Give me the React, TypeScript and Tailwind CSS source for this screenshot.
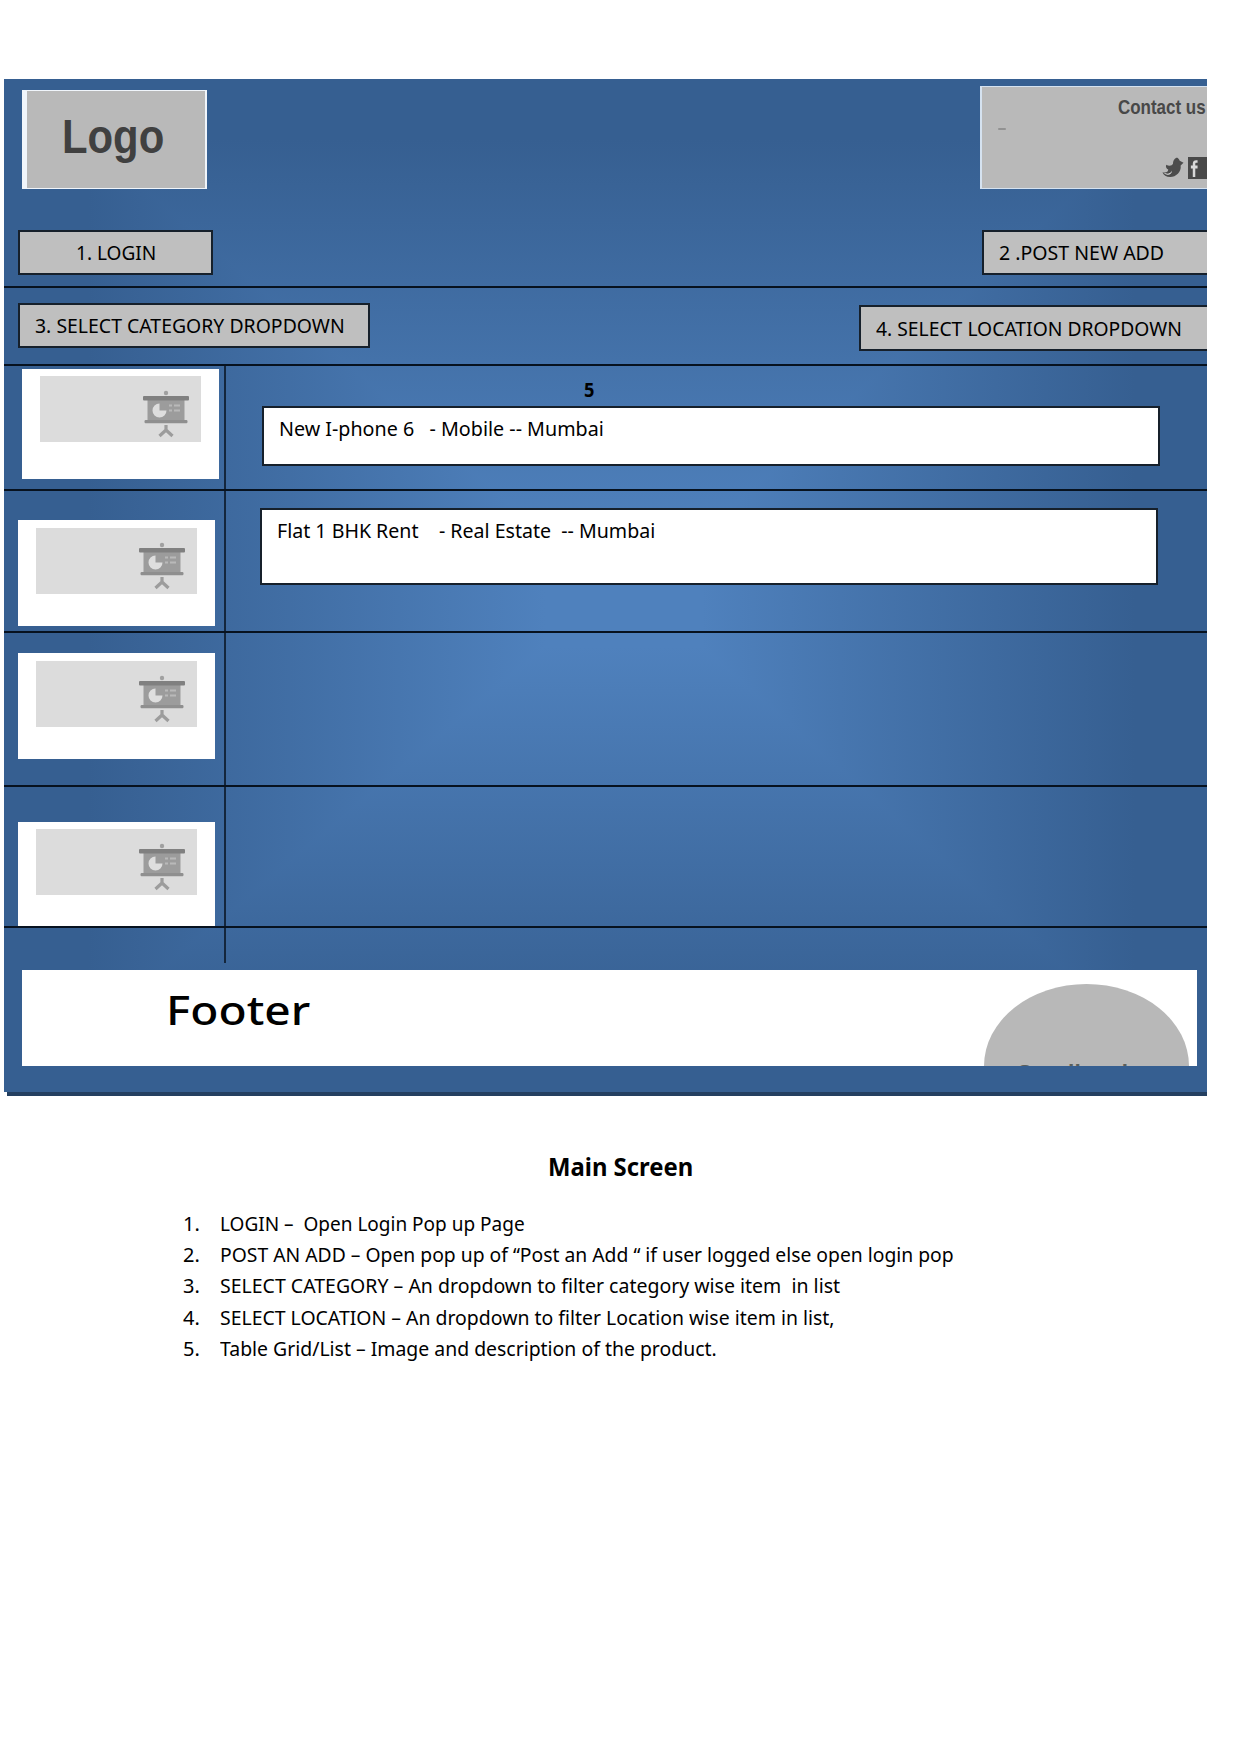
import { useLayoutEffect, useRef, useState, type ReactNode } from "react";

/* Condensed run of text: squeezed horizontally to the given width. */
function Fit({ w, children, className = "" }: { w: number; children: ReactNode; className?: string }) {
  const ref = useRef<HTMLSpanElement>(null);
  const [scale, setScale] = useState(1);
  useLayoutEffect(() => {
    if (ref.current) setScale(w / ref.current.offsetWidth);
  }, [w]);
  return (
    <span className="block h-full" style={{ width: w }}>
      <span
        ref={ref}
        className={"inline-block origin-left whitespace-pre " + className}
        style={{ transform: `scaleX(${scale})` }}
      >
        {children}
      </span>
    </span>
  );
}

function Thumb({ className }: { className: string }) {
  return (
    <div className={"w-[197px] bg-white pl-[18px] " + className}>
      <div className="flex h-[66px] w-[161px] justify-end bg-[#dcdcdc] pr-[11px] pt-[14px]">
        <svg className="h-[50px] w-[48px]" viewBox="0 0 48 50">
          <circle cx="24" cy="3" r="2.2" fill="#a0a0a0" />
          <rect x="5.500" y="8" width="37" height="25" fill="#9c9c9c" />
          <rect x="1" y="6" width="46" height="4.500" rx="1" fill="#808080" />
          <rect x="2.500" y="30" width="43" height="3.200" rx="1.200" fill="#8f8f8f" />
          <path d="M17.500 13.500a7 7 0 1 0 7 7h-7z" fill="#dedede" />
          <path d="M27 15.500h3M32 15.500h6M27 20.500h3M32 20.500h6" stroke="#b9b9b9" strokeWidth="2" />
          <path d="M24 35v6M24 40l-6.500 6M24 40l6.500 6" stroke="#9c9c9c" strokeWidth="3.200" fill="none" />
        </svg>
      </div>
    </div>
  );
}

const notes: { n: string; t: string; w: number }[] = [
  { n: "1.", t: "LOGIN –  Open Login Pop up Page", w: 305 },
  { n: "2.", t: "POST AN ADD – Open pop up of “Post an Add “ if user logged else open login pop", w: 734 },
  { n: "3.", t: "SELECT CATEGORY – An dropdown to filter category wise item  in list", w: 620 },
  { n: "4.", t: "SELECT LOCATION – An dropdown to filter Location wise item in list,", w: 615 },
  { n: "5.", t: "Table Grid/List – Image and description of the product.", w: 497 },
];

export default function App() {
  return (
    <div className="min-h-[1754px] w-[1240px] bg-white pt-[79px] font-['Noto_Sans',sans-serif] text-[20px] leading-[28px] text-black">
      <div className="ml-1 h-[1013px] w-[1203px] bg-[linear-gradient(to_right,#365f91_0%,#365f91_7%,#4f81bd_45%,#4f81bd_58%,#365f91_94%,#365f91_100%),linear-gradient(to_bottom,#365f91_0%,#365f91_6%,#4f81bd_45%,#4f81bd_56%,#365f91_94%,#365f91_100%)] bg-blend-darken">
        {/* Header */}
        <header className="flex h-[209px] flex-col border-b-2 border-[#07121f]">
          <div className="flex h-[151px] justify-between">
            <div className="ml-[18px] mt-[11px] flex h-[99px] w-[185px] border-y border-l-[5px] border-r-2 border-[#f0f5fb] bg-[#b9b9b9] pl-[35px] pt-[20px]">
              <Fit w={102} className="font-['Liberation_Sans'] text-[48px] font-bold leading-[52px] text-[#404040]">Logo</Fit>
            </div>
            <div className="mt-[7px] h-[103px] w-[227px] overflow-hidden border-y border-l-2 border-[#d5e2f0] bg-[#b9b9b9]">
              <div className="pl-[136px] pt-[6px]">
                <div className="h-7"><Fit w={88} className="font-['Liberation_Sans'] text-[21px] font-bold leading-[28px] text-[#484848]">Contact us</Fit></div>
              </div>
              <div className="ml-4 mt-[7px] h-[2px] w-2 rounded-full bg-[#929292]" />
              <div className="ml-[179px] mt-[27px] flex gap-[3px]">
                <svg className="h-[22px] w-[24px] shrink-0" viewBox="0 0 24 23">
                  <path d="M1 16c4 1 6-1 6-3-2-1-3-3-2-5 3 2 6 1 7-1 0-4 3-7 5-6 1 1 2 2 2 3l4 2-3 3c1 7-5 12-11 12-4 0-7-2-8-5z" fill="#4c4c4c" />
                  <path d="M2 16c4 3 8 1 9-2 0 4-5 7-9 2z" fill="#e2e2e2" />
                </svg>
                <svg className="h-[22px] w-[22px] shrink-0" viewBox="0 0 23 23">
                  <rect width="23" height="23" fill="#494949" />
                  <path d="M5 21V12H3V9h2V7c0-3 2-4 5-3.500V6c-2-.3-2.400 0-2.400 1.500V9H10v3H7.600v9z" fill="#d8d8d8" />
                </svg>
              </div>
            </div>
          </div>
          <div className="flex justify-between pl-[14px]">
            <div className="h-[45px] w-[195px] border-2 border-[#16202b] bg-[#bfbfbf] pl-[56px] pt-[7px]">
              <Fit w={80}>1. LOGIN</Fit>
            </div>
            <div className="h-[45px] w-[225px] border-2 border-r-0 border-[#16202b] bg-[#bfbfbf] pl-[15px] pt-[7px]">
              <Fit w={165}>2 .POST NEW ADD</Fit>
            </div>
          </div>
        </header>

        {/* Filters */}
        <div className="flex h-[78px] items-start justify-between border-b-2 border-[#07121f] pl-[14px] pt-[15px]">
          <div className="h-[45px] w-[352px] border-2 border-[#16202b] bg-[#bfbfbf] pl-[15px] pt-[7px]">
            <Fit w={310}>3. SELECT CATEGORY DROPDOWN</Fit>
          </div>
          <div className="mt-[2px] h-[46px] w-[348px] border-2 border-r-0 border-[#16202b] bg-[#bfbfbf] pl-[15px] pt-[8px]">
            <Fit w={306}>4. SELECT LOCATION DROPDOWN</Fit>
          </div>
        </div>

        {/* Listing grid */}
        <div>
          <div className="flex h-[125px] border-b-2 border-[#07121f]">
            <div className="w-[222px] border-r-2 border-[#14263c] pl-[18px] pt-[3px]"><Thumb className="h-[110px] pt-[7px]" /></div>
            <div className="pl-[36px]">
              <div className="h-[40px] pl-[322px] pt-[10px] font-bold"><Fit w={10}>5</Fit></div>
              <div className="h-[60px] w-[898px] border-2 border-[#16202b] bg-white pl-[15px] pt-[7px]">
                <Fit w={325}>{"New I-phone 6   - Mobile -- Mumbai"}</Fit>
              </div>
            </div>
          </div>
          <div className="flex h-[142px] border-b-2 border-[#07121f]">
            <div className="w-[222px] border-r-2 border-[#14263c] pl-[14px] pt-[29px]"><Thumb className="h-[106px] pt-2" /></div>
            <div className="pl-[34px] pt-[17px]">
              <div className="h-[77px] w-[898px] border-2 border-[#16202b] bg-white pl-[15px] pt-[7px]">
                <Fit w={378}>{"Flat 1 BHK Rent    - Real Estate  -- Mumbai"}</Fit>
              </div>
            </div>
          </div>
          <div className="h-[154px] border-b-2 border-[#07121f]">
            <div className="h-full w-[222px] border-r-2 border-[#14263c] pl-[14px] pt-5"><Thumb className="h-[106px] pt-2" /></div>
          </div>
          <div className="h-[141px] border-b-2 border-[#07121f]">
            <div className="h-full w-[222px] border-r-2 border-[#14263c] pl-[14px] pt-[35px]"><Thumb className="h-[104px] pt-[7px]" /></div>
          </div>
          <div className="h-[35px] w-[222px] border-r-2 border-[#14263c]" />
        </div>

        {/* Footer */}
        <footer className="ml-[18px] mt-[7px] flex h-[96px] w-[1175px] justify-between overflow-hidden bg-white pl-[144px] pr-[8px]">
          <div className="pt-[13px]"><Fit w={144} className="text-[40px] font-medium leading-[54px]">Footer</Fit></div>
          <div className="mt-[14px] h-[164px] w-[205px] overflow-hidden rounded-[50%] bg-[#b8b8b8] pl-[33px] pt-[77px]">
            <Fit w={111} className="font-['Liberation_Sans'] text-[24px] font-bold leading-[26px] text-[#5b5f5b]">Scroll and</Fit>
          </div>
        </footer>
      </div>
      <div className="ml-[7px] h-1 w-[1200px] bg-[#243f60]" />

      {/* Notes */}
      <h1 className="ml-[548px] mt-[53px] h-[34px] text-[25px] font-bold leading-[34px]"><Fit w={145}>Main Screen</Fit></h1>
      <ol className="mt-[27px] pl-[183px]">
        {notes.map((x) => (
          <li key={x.n} className="flex h-[31.2px]">
            <span className="w-[37px]"><Fit w={17}>{x.n}</Fit></span>
            <Fit w={x.w}>{x.t}</Fit>
          </li>
        ))}
      </ol>
    </div>
  );
}
